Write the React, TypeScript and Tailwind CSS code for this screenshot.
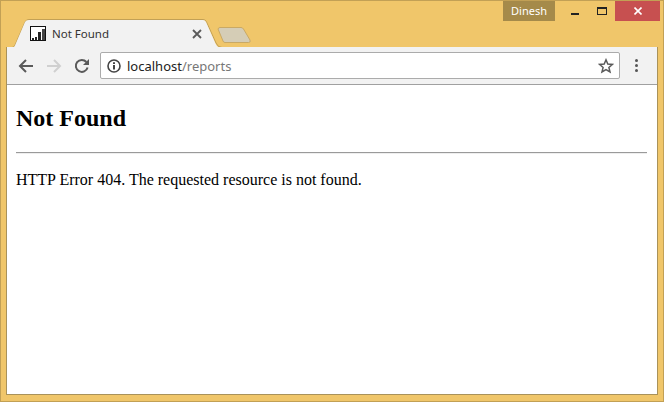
import React from "react";

const ui = { fontFamily: '"Noto Sans", "Open Sans", sans-serif' };

export default function App() {
  return (
    <div className="flex h-[402px] w-[664px] flex-col overflow-hidden border border-[#c2a055] bg-[#f0c66a]">
      {/* title strip */}
      <div className="relative h-[46px] shrink-0">
        <svg className="absolute left-[4px] top-[17px]" width="250" height="30" viewBox="0 0 250 30">
          <path d="M1 29.5 H7 Q9 29.5 10 27 L20 4 Q21 1.5 24 1.5 H198 Q200.500 1.500 201.500 4 L211 25 Q213 29.5 217 29.5 H250" fill="none" stroke="#c2a055" strokeWidth="1" />
          <path d="M1 30 H7 Q9 30 10 27.5 L20 4 Q21 2 24 2 H198 Q200 2 201 4 L210.500 25.500 Q212.500 30 217 30 Z" fill="#f2f2f2" />
          <path d="M213 11 Q213.500 9.500 215 9.500 H236 Q237.500 9.500 238.500 11 L245 22 Q246 24.500 243.500 24.500 H220 Q218.500 24.500 218 23 Z" fill="#d5cdb6" stroke="#c9a965" strokeWidth="1" />
        </svg>
        <div className="absolute left-[29px] top-[25px] flex h-[15px] w-[16px] items-end justify-center gap-[1px] border border-[#111111] bg-white">
          <span className="h-[2px] w-[2px] bg-[#222222]" />
          <span className="h-[3px] w-[2px] bg-[#222222]" />
          <span className="h-[8px] w-[3px] bg-[#222222]" />
          <span className="h-[11px] w-[3px] bg-[#444444]" />
        </div>
        <span className="absolute left-[51px] top-[24px] text-[11.5px] leading-[18px] text-[#333333]" style={ui}>Not Found</span>
        <svg className="absolute left-[191px] top-[28px]" width="10" height="10" viewBox="0 0 10 10">
          <path d="M1 1 L9 9 M9 1 L1 9" stroke="#5a5a5a" strokeWidth="1.800" />
        </svg>
        {/* window controls */}
        <div className="absolute right-[108px] top-0 flex h-[20px] w-[52px] items-center justify-center bg-[#a58a4a] text-[11px] text-white" style={ui}>Dinesh</div>
        <div className="absolute right-[3px] top-0 flex h-[20px] items-start">
          <div className="flex h-[20px] w-[27px] items-center justify-center pt-[5px]"><span className="h-[2px] w-[8px] bg-[#222222]" /></div>
          <div className="flex h-[20px] w-[27px] items-center justify-center"><span className="h-[8px] w-[10px] border border-t-2 border-[#222222]" /></div>
          <div className="flex h-[20px] w-[45px] items-center justify-center bg-[#c75050]">
            <svg width="8" height="8" viewBox="0 0 8 8"><path d="M0.500 0.500 L7.500 7.500 M7.500 0.500 L0.500 7.500" stroke="#ffffff" strokeWidth="1.600" /></svg>
          </div>
        </div>
      </div>
      {/* browser body */}
      <div className="relative mx-[5px] mb-[6px] flex min-h-0 flex-1 flex-col border-x border-b border-[#a9925a] bg-white">
        <div className="flex h-[38px] shrink-0 items-center border-b border-[#a0a0a0] bg-[#f2f2f2]">
          <div className="flex w-[93px] shrink-0 items-center pl-[11px]">
            <svg width="16" height="16" viewBox="0 0 16 16"><path d="M15 8 H2 M8 2 L2 8 L8 14" fill="none" stroke="#5a5a5a" strokeWidth="2" /></svg>
            <svg className="ml-[12px]" width="16" height="16" viewBox="0 0 16 16"><path d="M1 8 H14 M8 2 L14 8 L8 14" fill="none" stroke="#d0d0d0" strokeWidth="2" /></svg>
            <svg className="ml-[12px]" width="16" height="16" viewBox="0 0 16 16"><path d="M13.600 9.500 A6 6 0 1 1 12.400 4" fill="none" stroke="#5a5a5a" strokeWidth="2" /><path d="M15 1 V7 H9 Z" fill="#5a5a5a" /></svg>
          </div>
          <div className="flex h-[27px] w-[520px] shrink-0 items-center rounded-[2px] border border-[#ababab] bg-white pl-[6px] pr-[5px]">
            <svg width="14" height="14" viewBox="0 0 14 14"><circle cx="7" cy="7" r="6" fill="none" stroke="#444444" strokeWidth="1.600" /><path d="M7 6 V10.500 M7 3.200 V5" stroke="#444444" strokeWidth="2" /></svg>
            <span className="ml-[6px] flex-1 text-[13px] leading-[20px]" style={ui}>
              <span className="text-[#222222]">localhost</span><span className="text-[#777777]">/reports</span>
            </span>
            <svg width="16" height="16" viewBox="0 0 16 16"><path d="M8 1.800 L9.800 6 L14.400 6.400 L10.900 9.400 L12 13.900 L8 11.500 L4 13.900 L5.100 9.400 L1.600 6.400 L6.200 6 Z" fill="none" stroke="#5a5a5a" strokeWidth="1.500" /></svg>
          </div>
          <div className="ml-[15px] flex flex-col gap-[2px]">
            <span className="h-[3px] w-[3px] rounded-full bg-[#555555]" />
            <span className="h-[3px] w-[3px] rounded-full bg-[#555555]" />
            <span className="h-[3px] w-[3px] rounded-full bg-[#555555]" />
          </div>
        </div>
        <div className="pl-[9px] pr-[10px] text-black" style={{ fontFamily: '"Liberation Serif", serif' }}>
          <h1 className="mt-[19px] text-[24px] font-bold leading-[28px]">Not Found</h1>
          <hr className="mt-[20px] border-t border-b border-t-[#9a9a9a] border-b-[#eeeeee]" />
          <p className="mt-[17px] text-[16px] leading-[18px]">HTTP Error 404. The requested resource is not found.</p>
        </div>
      </div>
    </div>
  );
}
